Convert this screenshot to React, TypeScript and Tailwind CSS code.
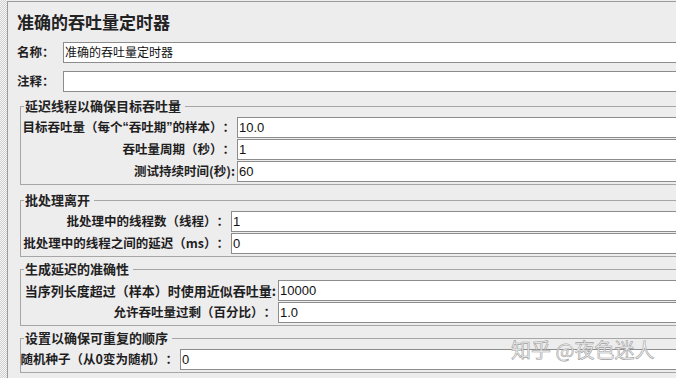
import React from "react";

const cjk = "font-['Noto_Sans_CJK_SC',sans-serif]";

function Field({ value, cls = "" }: { value: string; cls?: string }) {
  return (
    <div
      className={`h-[21px] bg-white border border-[#8c8c8c] pl-[1px] flex items-center text-[13px] text-[#111] font-['Liberation_Sans','Noto_Sans_CJK_SC',sans-serif] whitespace-nowrap overflow-hidden ${cls}`}
    >
      {value}
    </div>
  );
}

function Group({
  title,
  labelW,
  rows,
  cls = "",
}: {
  title: string;
  labelW: string;
  rows: [React.ReactNode, string][];
  cls?: string;
}) {
  return (
    <fieldset className={`border border-[#a6a6a6] ml-[3px] pl-[3px] pr-0 pb-[2px] pt-[3px] min-w-0 ${cls}`}>
      <legend className={`px-[1px] pr-[4px] text-[13px] leading-[16px] font-bold text-[#222] ${cjk}`}>{title}</legend>
      <div className={`grid ${labelW} gap-x-[2px] gap-y-[1px]`}>
        {rows.map(([l, v], i) => (
          <React.Fragment key={i}>
            <div className={`h-[21px] flex items-center justify-end whitespace-nowrap text-[12.5px] font-bold text-[#1e1e1e] ${cjk}`}>{l}</div>
            <Field value={v} />
          </React.Fragment>
        ))}
      </div>
    </fieldset>
  );
}

export default function App() {
  const q = "font-['Liberation_Sans',sans-serif]";
  return (
    <div className="relative w-[676px] h-[378px] overflow-hidden bg-[#eeeeee] flex [text-spacing-trim:space-all]">
      <div className="w-[7px] h-full shrink-0 bg-[repeating-conic-gradient(#cfcfcf_0_25%,#f7f7f7_0_50%)] bg-[length:2px_2px]" />
      <div className="w-[760px] shrink-0 mt-[1px] border-l border-t border-[#9a9a9a] bg-[#eeedee] pl-[9px] pt-[9px]">
        <div className={`h-[22px] flex items-center text-[17px] font-bold text-[#222] ${cjk}`}>准确的吞吐量定时器</div>
        <div className="mt-[9px] grid grid-cols-[44px_1fr] gap-x-[2px] gap-y-[8px]">
          <div className={`h-[21px] flex items-center text-[12.5px] font-bold text-[#1e1e1e] ${cjk}`}>名称：</div>
          <Field value="准确的吞吐量定时器" cls="!text-[12px]" />
          <div className={`h-[21px] flex items-center text-[12.5px] font-bold text-[#1e1e1e] ${cjk}`}>注释：</div>
          <Field value="" />
        </div>
        <div className="mt-[6px] flex flex-col">
          <Group
            title="延迟线程以确保目标吞吐量"
            labelW="grid-cols-[211px_1fr]"
            rows={[
              [
                <>
                  目标吞吐量（每个<span className={q}>“</span>吞吐期<span className={q}>”</span>的样本）：
                </>,
                "10.0",
              ],
              ["吞吐量周期（秒）：", "1"],
              ["测试持续时间(秒):", "60"],
            ]}
          />
          <Group
            title="批处理离开"
            labelW="grid-cols-[205px_1fr]"
            cls="mt-[7px]"
            rows={[
              ["批处理中的线程数（线程）：", "1"],
              ["批处理中的线程之间的延迟（ms）：", "0"],
            ]}
          />
          <Group
            title="生成延迟的准确性"
            labelW="grid-cols-[252px_1fr]"
            cls="mt-[4px]"
            rows={[
              [<span className="text-[13px]">当序列长度超过（样本）时使用近似吞吐量:</span>, "10000"],
              ["允许吞吐量过剩（百分比）：", "1.0"],
            ]}
          />
          <Group
            title="设置以确保可重复的顺序"
            labelW="grid-cols-[154px_1fr]"
            cls="mt-[4px]"
            rows={[["随机种子（从0变为随机）：", "0"]]}
          />
        </div>
      </div>
      <div
        className={`absolute left-[511px] top-[337px] text-[20px] leading-[26px] whitespace-nowrap text-[#f6f6f6] [-webkit-text-stroke:0.6px_#a0a0a0] ${cjk}`}
      >
        知乎 @夜色迷人
      </div>
    </div>
  );
}
